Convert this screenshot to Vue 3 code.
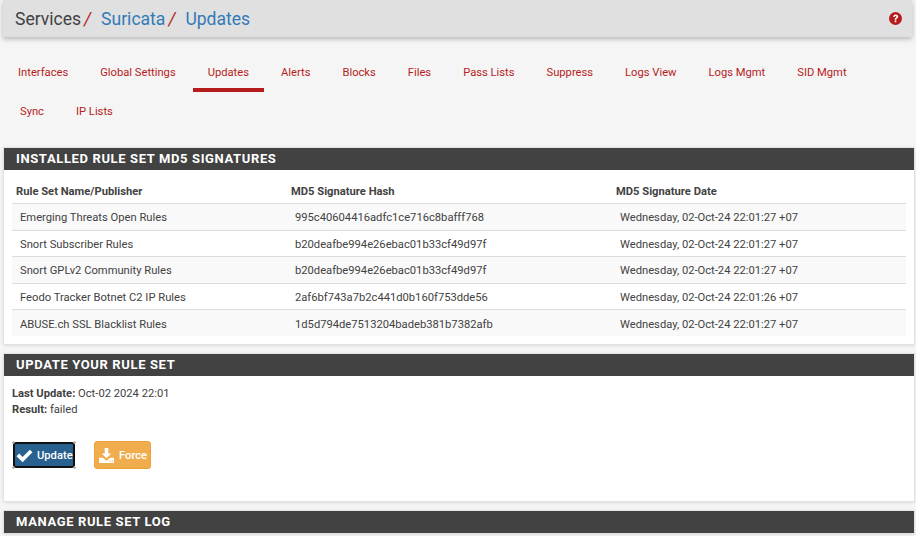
<template>
  <div class="page">
    <header class="page-head">
      <h1 class="crumbs">
        <span>Services</span><i class="sep">/</i>
        <a>Suricata</a><i class="sep">/</i>
        <a>Updates</a>
      </h1>
      <svg class="help" viewBox="0 0 24 24" aria-hidden="true">
        <circle cx="12" cy="12" r="12" fill="#b71c1c" />
        <path d="M7.600 9.300C7.800 6.600 9.600 4.600 12.300 4.600c2.700 0 4.600 1.600 4.600 3.900 0 1.700-.9 2.700-2.200 3.600-1 .7-1.200 1-1.200 2h-3c0-1.900.5-2.700 1.800-3.600.9-.7 1.400-1.100 1.400-1.800 0-.8-.6-1.300-1.500-1.300-1 0-1.600.6-1.700 1.900H7.600z" fill="#fff" />
        <rect x="10.500" y="15.600" width="3" height="3.200" fill="#fff" />
      </svg>
    </header>

    <nav class="tabs">
      <a v-for="t in tabs" :key="t" class="tab" :class="{ active: t === 'Updates' }">{{ t }}</a>
    </nav>

    <section class="panel first">
      <h2 class="panel-title">INSTALLED RULE SET MD5 SIGNATURES</h2>
      <div class="panel-body table-wrap">
        <table>
          <thead>
            <tr>
              <th class="c1">Rule Set Name/Publisher</th>
              <th class="c2">MD5 Signature Hash</th>
              <th>MD5 Signature Date</th>
            </tr>
          </thead>
          <tbody>
            <tr v-for="r in rules" :key="r.name">
              <td>{{ r.name }}</td>
              <td>{{ r.hash }}</td>
              <td>{{ r.date }}</td>
            </tr>
          </tbody>
        </table>
      </div>
    </section>

    <section class="panel">
      <h2 class="panel-title">UPDATE YOUR RULE SET</h2>
      <div class="panel-body update">
        <div class="line"><b>Last Update:</b> Oct-02 2024 22:01</div>
        <div class="line"><b>Result:</b> failed</div>
        <div class="buttons">
          <button class="btn primary">
            <svg viewBox="0 0 16 16" class="ico" aria-hidden="true">
              <path d="M0.500 8.600 3 6.100 6.200 9.300 13 2.500 15.500 5 6.200 14.300z" fill="#fff" />
            </svg>
            Update
          </button>
          <button class="btn warn">
            <svg viewBox="0 0 16 16" class="ico" aria-hidden="true">
              <path d="M6.300 1h3.400v5h2.800L8 10.500 3.500 6h2.800z" fill="#fff" />
              <path d="M1 10h3.500L8 13l3.500-3H15v5H1z" fill="#fff" />
              <rect x="11" y="12.800" width="1" height="1" fill="#f0ad4e" />
              <rect x="13" y="12.800" width="1" height="1" fill="#f0ad4e" />
            </svg>
            Force
          </button>
        </div>
      </div>
    </section>

    <section class="panel last">
      <h2 class="panel-title">MANAGE RULE SET LOG</h2>
    </section>
  </div>
</template>

<script setup>
const tabs = [
  "Interfaces",
  "Global Settings",
  "Updates",
  "Alerts",
  "Blocks",
  "Files",
  "Pass Lists",
  "Suppress",
  "Logs View",
  "Logs Mgmt",
  "SID Mgmt",
  "Sync",
  "IP Lists",
];

const rules = [
  { name: "Emerging Threats Open Rules", hash: "995c40604416adfc1ce716c8bafff768", date: "Wednesday, 02-Oct-24 22:01:27 +07" },
  { name: "Snort Subscriber Rules", hash: "b20deafbe994e26ebac01b33cf49d97f", date: "Wednesday, 02-Oct-24 22:01:27 +07" },
  { name: "Snort GPLv2 Community Rules", hash: "b20deafbe994e26ebac01b33cf49d97f", date: "Wednesday, 02-Oct-24 22:01:27 +07" },
  { name: "Feodo Tracker Botnet C2 IP Rules", hash: "2af6bf743a7b2c441d0b160f753dde56", date: "Wednesday, 02-Oct-24 22:01:26 +07" },
  { name: "ABUSE.ch SSL Blacklist Rules", hash: "1d5d794de7513204badeb381b7382afb", date: "Wednesday, 02-Oct-24 22:01:27 +07" },
];
</script>

<style>
html,
body {
  margin: 0;
  height: 100%;
  overflow: hidden;
  background: #f5f5f5;
}
</style>

<style scoped>
.page {
  font-family: Roboto, "Liberation Sans", sans-serif;
  font-size: 11.2px;
  color: #424242;
  height: 536px;
  overflow: hidden;
}

.page-head {
  margin: 0 4px 0 3px;
  height: 37px;
  padding: 0 10px 0 12px;
  display: flex;
  align-items: center;
  justify-content: space-between;
  background: #e0e0e0;
  box-shadow: 0 2px 5px rgba(0, 0, 0, 0.26);
}

.crumbs {
  margin: 0;
  font-size: 17.55px;
  font-weight: 400;
  color: #424242;
}

.crumbs a {
  color: #337ab7;
}

.sep {
  font-style: italic;
  color: #b71c1c;
  margin: 0 10px 0 3px;
}

.help {
  width: 13px;
  height: 13px;
}

.tabs {
  display: flex;
  flex-wrap: wrap;
  column-gap: 2px;
  padding: 16px 0 0 3px;
  margin-bottom: 17px;
  width: 880px;
}

.tab {
  padding: 0 15px;
  height: 39px;
  line-height: 39px;
  color: #b71c1c;
  box-sizing: border-box;
}

.tab:nth-child(12) {
  margin-left: 2px;
}

.tab.active {
  border-bottom: 4px solid #b71c1c;
}

.panel {
  margin: 0 2px 10px 4px;
  background: #fff;
  box-shadow: 0 0 0 1px #e2e2e2, 0 1px 4px rgba(0, 0, 0, 0.16);
}

.panel.last {
  margin-bottom: 0;
}

.panel-title {
  margin: 0;
  height: 22px;
  line-height: 22px;
  padding: 0 12px;
  background: #424242;
  color: #fff;
  font-size: 13px;
  font-weight: 700;
  letter-spacing: 0.63px;
}

.table-wrap {
  padding: 9px 8px 8px;
}

table {
  width: 100%;
  border-collapse: collapse;
  table-layout: fixed;
}

th {
  text-align: left;
  font-weight: 700;
  height: 24px;
  padding: 0 4px;
}

.c1 {
  width: 267px;
}

.c2 {
  width: 317px;
}

td {
  height: 26.500px;
  padding: 2px 8px 0;
  border-top: 1px solid #ddd;
  box-sizing: border-box;
}

tbody tr:nth-child(odd) td {
  background: #f9f9f9;
}

.update {
  padding: 10px 8px 0;
  height: 125px;
  box-sizing: border-box;
}

.line {
  height: 16px;
  line-height: 16px;
}

.buttons {
  display: flex;
  align-items: center;
  gap: 19px;
  margin-top: 23px;
  padding-left: 1px;
}

.btn {
  display: flex;
  align-items: center;
  gap: 4px;
  height: 28px;
  padding: 0 3px;
  border: 1px solid transparent;
  border-radius: 3px;
  color: #fff;
  font: 500 11.2px Roboto, "Liberation Sans", sans-serif;
}

.primary {
  position: relative;
  width: 62px;
  height: 26px;
  gap: 4px;
  padding: 0 1px;
  background: #286090;
  border: 2px solid #111;
}

/* focus ring leaves small grey dots on the corners */
.primary::after {
  content: "";
  position: absolute;
  inset: -3px;
  background:
    radial-gradient(circle, #aaa 1px, transparent 1.500px) left top / 3px 3px no-repeat,
    radial-gradient(circle, #aaa 1px, transparent 1.500px) right top / 3px 3px no-repeat,
    radial-gradient(circle, #aaa 1px, transparent 1.500px) left bottom / 3px 3px no-repeat,
    radial-gradient(circle, #aaa 1px, transparent 1.500px) right bottom / 3px 3px no-repeat;
}

.warn {
  width: 57px;
  background: #f0ad4e;
  border-color: #eea236;
}

.ico {
  width: 17px;
  height: 17px;
  flex: none;
}
</style>
